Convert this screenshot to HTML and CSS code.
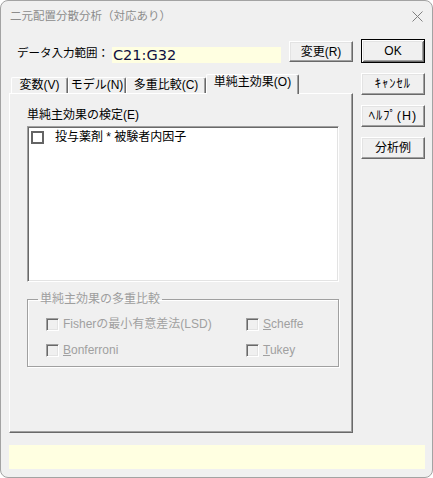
FILE: index.html
```html
<!DOCTYPE html>
<html lang="ja">
<head>
<meta charset="utf-8">
<title>二元配置分散分析（対応あり）</title>
<link rel="stylesheet" href="styles.css">
</head>
<body>
<div class="window">
  <div class="titlebar">
    <span class="title">二元配置分散分析（対応あり）</span>
    <svg class="close" width="11" height="11" viewBox="0 0 11 11"><path d="M0.5 0.5 L10.5 10.5 M10.5 0.5 L0.5 10.5" stroke="#808080" stroke-width="1" fill="none"/></svg>
  </div>
  <div class="main">
    <div class="left">
      <div class="range">
        <span class="range-label">データ入力範囲：</span>
        <span class="range-field">C21:G32</span>
        <button class="btn btn-change">変更(R)</button>
      </div>
      <div class="tabs">
        <div class="tab t1">変数(V)</div>
        <div class="tab t2">モデル(N)</div>
        <div class="tab t3">多重比較(C)</div>
        <div class="tab active">単純主効果(O)</div>
      </div>
      <div class="panel">
        <div class="list-label">単純主効果の検定(E)</div>
        <div class="listbox">
          <div class="item"><span class="chk"></span><span class="item-text">投与薬剤 * 被験者内因子</span></div>
        </div>
        <fieldset class="group">
          <legend>単純主効果の多重比較</legend>
          <div class="opts">
            <div class="opt"><span class="dchk"></span><span>Fisherの最小有意差法(LSD)</span></div>
            <div class="opt"><span class="dchk"></span><span><u>S</u>cheffe</span></div>
            <div class="opt"><span class="dchk"></span><span><u>B</u>onferroni</span></div>
            <div class="opt"><span class="dchk"></span><span><u>T</u>ukey</span></div>
          </div>
        </fieldset>
      </div>
    </div>
    <div class="right">
      <button class="btn btn-ok">OK</button>
      <button class="btn btn-side kana">ｷｬﾝｾﾙ</button>
      <button class="btn btn-side kana">ﾍﾙﾌﾟ(H)</button>
      <button class="btn btn-side">分析例</button>
    </div>
  </div>
  <div class="status"></div>
</div>
</body>
</html>
```

FILE: styles.css
```css
* { box-sizing: border-box; }
html, body { margin: 0; padding: 0; background: #ffffff; }
body {
  font-family: "Liberation Sans", "Noto Sans CJK JP", sans-serif;
  font-size: 12px;
  color: #000;
}
.window {
  width: 433px;
  height: 478px;
  border: 1px solid #a3a3a3;
  border-radius: 8px;
  background: #f0f0f0;
  overflow: hidden;
  padding: 0 6px 0 8px;
}
.titlebar {
  height: 29px;
  display: flex;
  align-items: center;
  justify-content: space-between;
  margin-left: -8px;
  margin-right: -6px;
  padding-left: 9px;
  padding-right: 9px;
}
.title {
  font-size: 11.5px;
  color: #8c8c8c;
  line-height: 14px;
  padding-top: 1px;
}
.close { display: block; margin-top: 1px; }

.main {
  display: flex;
  align-items: flex-start;
  gap: 8px;
}
.left {
  width: 344px;
  padding-top: 11px;
}
.right {
  width: 64px;
  padding-top: 9px;
  display: flex;
  flex-direction: column;
  gap: 10px;
}

.btn {
  font-family: "Liberation Sans", "Noto Sans CJK JP", sans-serif;
  font-size: 12px;
  color: #000;
  background: #f0f0f0;
  margin: 0;
  padding: 0;
  border: 1px solid;
  border-color: #ffffff #696969 #696969 #ffffff;
  box-shadow: inset -1px -1px 0 #a0a0a0, inset 1px 1px 0 #e3e3e3;
  line-height: 14px;
  display: flex;
  align-items: center;
  justify-content: center;
}
.btn-change { width: 64px; height: 21px; margin-left: 8px; }
.btn-ok {
  width: 64px;
  height: 24px;
  border: 1px solid #000;
  box-shadow: inset 1px 1px 0 #ffffff, inset -1px -1px 0 #696969, inset 2px 2px 0 #e3e3e3, inset -2px -2px 0 #a0a0a0;
}
.btn-side { width: 64px; height: 22px; }
.kana { letter-spacing: 1px; font-size: 12.5px; }

.range {
  display: flex;
  align-items: flex-start;
  height: 21px;
}
.range-label {
  width: 103px;
  padding-left: 8px;
  font-size: 11.5px;
  line-height: 14px;
  margin-top: 5px;
  white-space: nowrap;
  overflow: hidden;
}
.range-field {
  width: 169px;
  height: 16px;
  margin-top: 6px;
  background: #ffffe1;
  font-family: "DejaVu Sans", sans-serif;
  font-size: 14.5px;
  line-height: 16px;
  color: #101040;
  padding-left: 1px;
}

.tabs {
  display: flex;
  align-items: flex-start;
  height: 20px;
  margin-top: 12px;
  margin-bottom: -1px;
  padding-left: 2px;
}
.tab {
  height: 16px;
  margin-top: 3px;
  border-top: 1px solid #ffffff;
  border-left: 1px solid #ffffff;
  border-right: 1px solid #696969;
  box-shadow: inset -1px 0 0 #a0a0a0;
  border-radius: 2px 2px 0 0;
  text-align: center;
  line-height: 15px;
  white-space: nowrap;
  background: #f0f0f0;
}
.t1 { width: 57px; }
.t2 { width: 58px; }
.t3 { width: 80px; }
.tab.active {
  width: 93px;
  height: 20px;
  margin-top: 0;
  line-height: 14px;
  z-index: 1;
}

.panel {
  width: 344px;
  height: 340px;
  border-top: 1px solid #ffffff;
  border-left: 1px solid #ffffff;
  border-right: 1px solid #696969;
  border-bottom: 1px solid #696969;
  box-shadow: inset -1px -1px 0 #a0a0a0;
  padding: 14px 0 0 17px;
}
.list-label {
  line-height: 14px;
  height: 14px;
}
.listbox {
  width: 312px;
  height: 156px;
  margin-top: 4px;
  background: #ffffff;
  border: 1px solid;
  border-color: #a0a0a0 #ffffff #ffffff #a0a0a0;
  box-shadow: inset 1px 1px 0 #696969, inset -1px -1px 0 #e3e3e3;
  padding: 2px 0 0 3px;
}
.item {
  display: flex;
  align-items: center;
  height: 14px;
  margin-top: 1px;
}
.chk {
  width: 13px;
  height: 13px;
  border: 2px solid #646464;
  background: #fff;
  flex: none;
}
.item-text {
  margin-left: 11px;
  line-height: 14px;
  white-space: nowrap;
}

.group {
  width: 312px;
  margin: 10px 0 0 0;
  min-width: 0;
  border: 1px solid #a0a0a0;
  box-shadow: inset 1px 1px 0 #ffffff, 1px 1px 0 #ffffff;
  padding: 11px 0 9px 18px;
}
.group legend {
  color: #9e9e9e;
  line-height: 14px;
  padding: 0 2px;
  margin-left: -8px;
}
.opts {
  display: grid;
  grid-template-columns: 200px auto;
  row-gap: 12px;
}
.opt {
  display: flex;
  align-items: center;
  height: 14px;
  color: #a0a0a0;
  white-space: nowrap;
  line-height: 14px;
}
.opt u { text-decoration-thickness: 1px; text-underline-offset: 1px; }
.dchk {
  width: 13px;
  height: 13px;
  flex: none;
  margin-right: 4px;
  border: 1px solid;
  border-color: #a0a0a0 #ffffff #ffffff #a0a0a0;
  box-shadow: inset 1px 1px 0 #696969, inset -1px -1px 0 #e3e3e3;
  background: #f0f0f0;
}

.status {
  width: 416px;
  height: 24px;
  margin-top: 12px;
  background: #ffffe1;
}
```
